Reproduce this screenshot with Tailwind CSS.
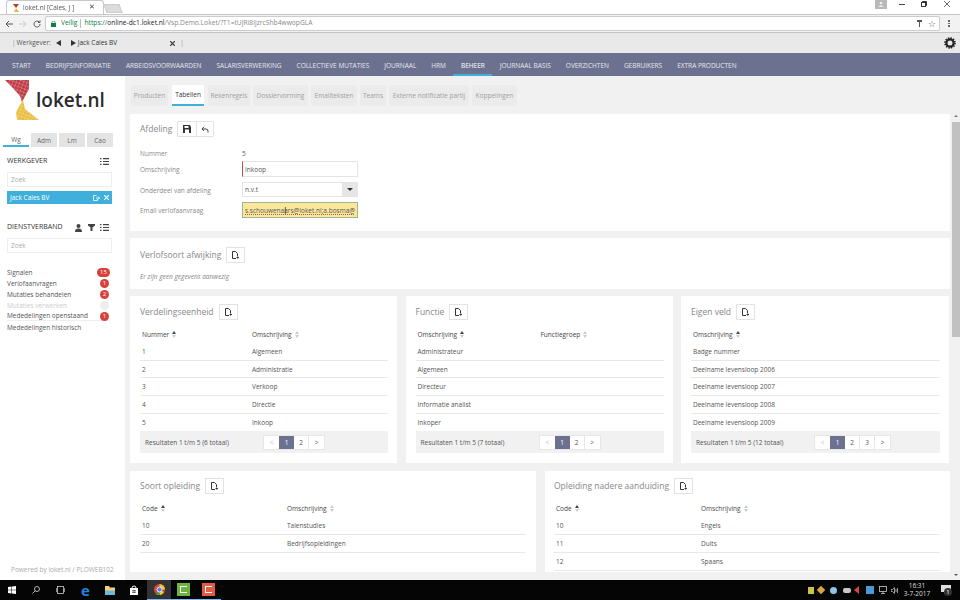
<!DOCTYPE html>
<html lang="nl">
<head>
  <meta charset="UTF-8">
  <title>loket.nl</title>
  <script src="https://cdn.jsdelivr.net/npm/@tailwindcss/browser@4"></script>
</head>
<body class="w-[960px] h-[600px] overflow-hidden bg-white font-['Open_Sans',sans-serif] text-[6.5px] text-[#555] blur-[0.35px]">

  <!-- Chrome tabs -->
  <div class="h-[15px] flex items-end bg-white border-b border-[#c8c8c8] relative">
    <div class="ml-[6px] w-[98px] h-[14px] border border-b-0 border-[#c8c8c8] rounded-t-[3px] bg-white flex items-center pl-[6px] pr-[2px] text-[6.5px] text-[#555]">
      <svg class="w-[6px] h-[8px] mr-[4px]" viewBox="0 0 6 8"><path d="M0 0h6L3 4z" fill="#c0392b"/><path d="M3 4 1 8h5z" fill="#e6b93a"/></svg>
      <span>loket.nl [Cales, J ]</span>
      <span class="ml-auto mr-[6px] text-[7px] text-[#444]">✕</span>
    </div>
    <div class="ml-[1px] w-[16px] h-[9px] mb-[1px] bg-[#dcdcdc] border border-[#ccc] skew-x-[20deg]"></div>
    <div class="ml-auto mb-[5px] flex items-center">
      <div class="w-[12px] h-[10px] bg-[#b9b9b9] flex items-center justify-center">
        <svg class="w-[6px] h-[6px]" viewBox="0 0 6 6"><circle cx="3" cy="2" r="1.3" fill="#eee"/><path d="M.5 6c0-2 5-2 5 0z" fill="#eee"/></svg>
      </div>
      <svg class="w-[6px] h-[6px] ml-[12px]" viewBox="0 0 6 6"><path d="M0 3.5h6" stroke="#444"/></svg>
      <svg class="w-[6px] h-[6px] ml-[16px]" viewBox="0 0 6 6" fill="none" stroke="#333"><rect x=".5" y="1.5" width="4" height="4"/><path d="M1.5 1.5V.5h4v4h-1"/></svg>
      <svg class="w-[6px] h-[6px] ml-[17px] mr-[10px]" viewBox="0 0 6 6" stroke="#444" stroke-width=".8"><path d="M0 0l6 6M6 0 0 6"/></svg>
    </div>
  </div>

  <!-- Chrome toolbar -->
  <div class="h-[18px] bg-[#f2f2f2] border-b border-[#c4c4c4] flex items-center">
    <svg class="ml-[5px] w-[8px] h-[8px]" viewBox="0 0 8 8" fill="none" stroke="#555" stroke-width="1"><path d="M8 4H1M4 1 1 4l3 3"/></svg>
    <svg class="ml-[6px] w-[8px] h-[8px]" viewBox="0 0 8 8" fill="none" stroke="#ccc" stroke-width="1"><path d="M0 4h7M4 1l3 3-3 3"/></svg>
    <svg class="ml-[6px] w-[8px] h-[8px]" viewBox="0 0 8 8" fill="none" stroke="#555" stroke-width="1"><path d="M7 4a3 3 0 1 1-1-2.2M7 .5v2H5"/></svg>
    <div class="ml-[4px] w-[895px] h-[15px] bg-white border border-[#ccc] rounded-[2px] flex items-center text-[6.7px]">
      <svg class="ml-[5px] w-[5px] h-[6px]" viewBox="0 0 5 6"><rect y="2" width="5" height="4" fill="#0b8043"/><path d="M1 2.5V1.500a1.500 1.500 0 0 1 3 0v1" fill="none" stroke="#0b8043" stroke-width=".7"/></svg>
      <span class="ml-[5px] text-[#0b8043]">Veilig</span>
      <span class="ml-[3px] mr-[3px] w-px h-[9px] bg-[#bbb]"></span>
      <span class="text-[#0b8043]">https://</span><span class="text-[#222]">online-dc1.loket.nl</span><span class="text-[#888]">/Vsp.Demo.Loket/?T1=tUJRi8IjzrcShb4wwopGLA</span>
      <svg class="ml-auto w-[5px] h-[7px]" viewBox="0 0 5 7"><path d="M0 0h5v2H3v5H2V2H0z" fill="#555"/></svg>
      <span class="ml-[6px] mr-[3px] text-[9px] leading-none text-[#555]">☆</span>
    </div>
    <div class="ml-[8px] flex flex-col gap-[1px]">
      <span class="w-[1.5px] h-[1.5px] bg-[#666]"></span><span class="w-[1.5px] h-[1.5px] bg-[#666]"></span><span class="w-[1.5px] h-[1.5px] bg-[#666]"></span>
    </div>
  </div>

  <!-- Employer bar -->
  <div class="h-[20px] bg-[#e9e9e9] flex items-center pl-[12px] text-[6.5px] text-[#555]">
    <span class="text-[#999] mr-[1px]">|</span><span>Werkgever:</span>
    <span class="ml-[5px] w-0 h-0 border-y-[3px] border-y-transparent border-r-[5px] border-r-[#333]"></span>
    <span class="ml-[10px] w-0 h-0 border-y-[3px] border-y-transparent border-l-[5px] border-l-[#333]"></span>
    <span class="ml-[2px] text-[#333]">Jack Cales BV</span>
    <svg class="ml-[53px] w-[5px] h-[5px]" viewBox="0 0 5 5" stroke="#333" stroke-width="1.2"><path d="M0 0l5 5M5 0 0 5"/></svg>
    <span class="ml-[5px] text-[#999]">|</span>
    <svg class="ml-auto mr-[4px] w-[12px] h-[12px]" viewBox="0 0 12 12"><circle cx="6" cy="6" r="3.6" fill="none" stroke="#222" stroke-width="2.2"/><circle cx="6" cy="6" r="5" fill="none" stroke="#222" stroke-width="1.6" stroke-dasharray="1.4 1.2"/></svg>
  </div>

  <!-- Main nav -->
  <nav class="h-[23px] bg-[#6d7190] flex items-stretch pl-[4.5px] text-[6.5px] uppercase text-[#e6e7ee]">
    <a class="px-[7.5px] pt-[2px] flex items-center">Start</a>
    <a class="px-[7.5px] pt-[2px] flex items-center">Bedrijfsinformatie</a>
    <a class="px-[7.5px] pt-[2px] flex items-center">Arbeidsvoorwaarden</a>
    <a class="px-[7.5px] pt-[2px] flex items-center">Salarisverwerking</a>
    <a class="px-[7.5px] pt-[2px] flex items-center">Collectieve mutaties</a>
    <a class="px-[7.5px] pt-[2px] flex items-center">Journaal</a>
    <a class="px-[7.5px] pt-[2px] flex items-center">HRM</a>
    <a class="px-[7.5px] pt-[4px] flex items-center text-white border-b-2 border-[#3fb0dc]">Beheer</a>
    <a class="px-[7.5px] pt-[2px] flex items-center">Journaal basis</a>
    <a class="px-[7.5px] pt-[2px] flex items-center">Overzichten</a>
    <a class="px-[7.5px] pt-[2px] flex items-center">Gebruikers</a>
    <a class="px-[7.5px] pt-[2px] flex items-center">Extra producten</a>
  </nav>

  <div class="h-[504px] flex overflow-hidden">

    <!-- Sidebar -->
    <aside class="w-[125px] shrink-0 bg-white flex flex-col">
      <div class="h-[57px] flex relative">
        <svg class="absolute left-0 top-0 w-[45px] h-[50px]" viewBox="0 0 45 50">
          <defs>
            <pattern id="tiles" width="3.4" height="3.4" patternUnits="userSpaceOnUse" patternTransform="rotate(20)">
              <path d="M0 0h3.4M0 0v3.4" stroke="#fff" stroke-width=".4"/>
            </pattern>
          </defs>
          <path d="M5 4 29 4 29 13 22 26 20 20 12 11z" fill="#bf3a45"/>
          <path d="M23 24 25 33 39 44 33 44 17 44 16 36z" fill="#e8bd3f"/>
          <path d="M5 4 29 4 29 13 22 26 20 20 12 11z" fill="url(#tiles)"/>
          <path d="M23 24 25 33 39 44 33 44 17 44 16 36z" fill="url(#tiles)"/>
        </svg>
        <span class="ml-[36px] mt-[10px] text-[19px] leading-[28px] font-semibold text-[#2b2b2b]">loket.nl</span>
      </div>

      <div class="flex gap-[2px] pl-[3px] text-[6.5px] text-[#666]">
        <div class="w-[26px] h-[14px] pt-px flex items-center justify-center border-b-2 border-[#3fb0dc] bg-white">Wg</div>
        <div class="w-[26px] h-[14px] pt-px flex items-center justify-center bg-[#e4e4e4]">Adm</div>
        <div class="w-[26px] h-[14px] pt-px flex items-center justify-center bg-[#e4e4e4]">Lm</div>
        <div class="w-[26px] h-[14px] pt-px flex items-center justify-center bg-[#e4e4e4]">Cao</div>
      </div>

      <div class="mt-[9px] pl-[7px] pr-[13px]">
        <div class="h-[10px] pt-px pr-[3px] flex items-center justify-between text-[#333] text-[7px]">
          <span>WERKGEVER</span>
          <svg class="w-[9px] h-[7px]" viewBox="0 0 9 7" fill="#444"><path d="M0 0h1.500v1.200H0zM3 0h6v1.200H3zM0 2.900h1.500v1.200H0zM3 2.900h6v1.200H3zM0 5.800h1.500V7H0zM3 5.800h6V7H3z"/></svg>
        </div>
        <div class="mt-[6px] h-[15px] pt-px border border-[#eee] flex items-center pl-[3px] text-[#aaa]">Zoek</div>
        <div class="mt-[4px] h-[13px] bg-[#3fb0dc] flex items-center pl-[3px] pr-[3px] text-white">
          <span>Jack Cales BV</span>
          <svg class="ml-auto w-[7px] h-[6px]" viewBox="0 0 7 6" fill="none" stroke="#fff" stroke-width=".8"><path d="M3.500.5H.5v5h4V4M3 3h3.500M5 1.500 6.500 3 5 4.500"/></svg>
          <svg class="ml-[4px] w-[5px] h-[5px]" viewBox="0 0 5 5" stroke="#fff" stroke-width="1.2"><path d="M0 0l5 5M5 0 0 5"/></svg>
        </div>
      </div>

      <div class="mt-[18px] pl-[7px] pr-[13px]">
        <div class="h-[10px] pt-px pr-[3px] flex items-center text-[#333] text-[7px]">
          <span>DIENSTVERBAND</span>
          <svg class="ml-auto w-[9px] h-[8px]" viewBox="0 0 9 8" fill="#444"><circle cx="4.500" cy="2" r="2"/><path d="M1 8c0-3 2-3.500 3.500-3.500S8 5 8 8z"/></svg>
          <svg class="ml-[5px] w-[7px] h-[7px]" viewBox="0 0 7 7" fill="#444"><path d="M0 0h7v1.500L4.500 3.500V7h-2V3.500L0 1.500z"/></svg>
          <svg class="ml-[5px] w-[9px] h-[7px]" viewBox="0 0 9 7" fill="#444"><path d="M0 0h1.500v1.200H0zM3 0h6v1.200H3zM0 2.900h1.500v1.200H0zM3 2.900h6v1.200H3zM0 5.800h1.500V7H0zM3 5.800h6V7H3z"/></svg>
        </div>
        <div class="mt-[6px] h-[15px] pt-px border border-[#eee] flex items-center pl-[3px] text-[#aaa]">Zoek</div>
      </div>

      <ul class="mt-[13px] pl-[7px] pr-[15px] text-[#555]">
        <li class="h-[11px] pt-[2px] flex items-center justify-between"><span>Signalen</span><span class="w-[13px] h-[9px] rounded-full bg-[#d9403a] text-white text-[6px] leading-[9px] text-center">15</span></li>
        <li class="h-[11px] pt-[2px] flex items-center justify-between"><span>Verlofaanvragen</span><span class="w-[9px] h-[9px] mr-[1px] rounded-full bg-[#d9403a] text-white text-[6px] leading-[9px] text-center">1</span></li>
        <li class="h-[11px] pt-[2px] flex items-center justify-between"><span>Mutaties behandelen</span><span class="w-[9px] h-[9px] mr-[1px] rounded-full bg-[#d9403a] text-white text-[6px] leading-[9px] text-center">2</span></li>
        <li class="h-[11px] pt-[2px] flex items-center justify-between text-[#ccc]"><span>Mutaties verwerken</span><span class="w-[9px] h-[9px] mr-[1px] rounded-full bg-[#eee]"></span></li>
        <li class="h-[11px] pt-[2px] flex items-center justify-between border-b border-[#eee]"><span>Mededelingen openstaand</span><span class="w-[9px] h-[9px] mr-[1px] rounded-full bg-[#d9403a] text-white text-[6px] leading-[9px] text-center">1</span></li>
        <li class="h-[11px] pt-[2px] flex items-center"><span>Mededelingen historisch</span></li>
      </ul>

      <div class="mt-auto pl-[11px] pb-[5px] text-[#aaa] text-[6.5px]">Powered by loket.nl / PLOWEB102</div>
    </aside>

    <!-- Content -->
    <main class="flex-1 bg-[#f1f1f1] pl-[5px] pr-[2px] pt-[9px] overflow-hidden">

      <div class="flex gap-[3px] h-[21px] pl-[1px] text-[#a0a0a0]">
        <div class="w-[37px] pt-px bg-[#ebebeb] rounded-[2px] flex items-center justify-center">Producten</div>
        <div class="w-[32px] pt-px mx-[1px] bg-white text-[#333] border-b-2 border-[#3fb0dc] flex items-center justify-center">Tabellen</div>
        <div class="w-[42px] pt-px bg-[#ebebeb] rounded-[2px] flex items-center justify-center">Rekenregels</div>
        <div class="w-[55px] pt-px bg-[#ebebeb] rounded-[2px] flex items-center justify-center">Dossiervorming</div>
        <div class="w-[46px] pt-px bg-[#ebebeb] rounded-[2px] flex items-center justify-center">Emailteksten</div>
        <div class="w-[26px] pt-px bg-[#ebebeb] rounded-[2px] flex items-center justify-center">Teams</div>
        <div class="w-[80px] pt-px bg-[#ebebeb] rounded-[2px] flex items-center justify-center">Externe notificatie partij</div>
        <div class="w-[45px] pt-px bg-[#ebebeb] rounded-[2px] flex items-center justify-center">Koppelingen</div>
      </div>

      <!-- Afdeling -->
      <section class="mt-[8px] h-[117px] bg-white pl-[10px] pt-[7px]">
        <div class="flex items-center h-[16px]">
          <h2 class="text-[8.5px] text-[#888]">Afdeling</h2>
          <div class="ml-[5px] flex h-[16px] border border-[#e2e2e2] rounded-[1px]">
            <span class="w-[19px] flex items-center justify-center border-r border-[#e2e2e2]">
              <svg class="w-[8px] h-[8px]" viewBox="0 0 8 8"><path d="M0 0h6.500L8 1.500V8H0z" fill="#333"/><rect x="1.500" y="1" width="4" height="2" fill="#fff"/><rect x="2" y="4.500" width="4" height="3.500" fill="#fff"/></svg>
            </span>
            <span class="w-[16px] flex items-center justify-center">
              <svg class="w-[8px] h-[7px]" viewBox="0 0 8 7" fill="none" stroke="#444" stroke-width="1"><path d="M1 3h4a2 2 0 0 1 2 2v1.500M3 .8 1 3l2 2"/></svg>
            </span>
          </div>
        </div>
        <div class="mt-[10px] h-[12px] pt-[2px] flex items-center"><span class="w-[102px] text-[#888]">Nummer</span><span class="text-[#555]">5</span></div>
        <div class="mt-[2px] h-[16px] flex items-center"><span class="w-[102px] pt-[2px] text-[#888]">Omschrijving</span>
          <div class="w-[116px] h-[16px] pt-px border border-[#e4e4e4] border-l-[#c0504d] flex items-center pl-[2px] text-[#555]">Inkoop</div>
        </div>
        <div class="mt-[5px] h-[15px] flex items-center"><span class="w-[102px] pt-[2px] text-[#888]">Onderdeel van afdeling</span>
          <div class="w-[116px] h-[15px] border border-[#e4e4e4] flex items-center pl-[2px] text-[#555]"><span class="pt-px">n.v.t</span>
            <span class="ml-auto w-[15px] h-full bg-[#e6e6e6] flex items-center justify-center"><span class="w-0 h-0 border-x-[3px] border-x-transparent border-t-[3px] border-t-[#333]"></span></span>
          </div>
        </div>
        <div class="mt-[5px] h-[16px] flex items-center"><span class="w-[102px] pt-[2px] text-[#888]">Email verlofaanvraag</span>
          <div class="w-[116px] h-[16px] pt-px border border-[#9db59b] bg-[#fde89a] flex items-center pl-[2px] text-[#555] underline decoration-dotted decoration-[#c0504d] whitespace-nowrap relative">s.schouwenaars@loket.nl;a.bosma@
            <span class="absolute left-[41px] top-[2px] text-[9px] leading-[11px] text-[#333] no-underline">I</span>
          </div>
        </div>
      </section>

      <!-- Verlofsoort afwijking -->
      <section class="mt-[7px] h-[51px] bg-white pl-[10px] pt-[9px]">
        <div class="flex items-center h-[16px]">
          <h2 class="text-[8.5px] text-[#888]">Verlofsoort afwijking</h2>
          <span class="ml-[5px] w-[19px] h-[16px] border border-[#e2e2e2] flex items-center justify-center">
            <svg class="w-[7px] h-[8px]" viewBox="0 0 7 8" fill="none" stroke="#333" stroke-width="1"><path d="M4 7.500H.5v-7h3l2 2v2.500"/><path d="M4.500 6.500h2.500M5.700 5.300v2.400" stroke-width=".9"/></svg>
          </span>
        </div>
        <p class="mt-[9px] italic text-[#888] text-[6.5px]">Er zijn geen gegevens aanwezig</p>
      </section>

      <!-- Drie tabellen -->
      <div class="mt-[7px] flex gap-[8.500px]">

        <section class="w-[267px] h-[167px] bg-white pl-[10px] pr-[9px] pt-[8px]">
          <div class="flex items-center h-[16px]">
            <h2 class="text-[8.5px] text-[#888]">Verdelingseenheid</h2>
            <span class="ml-[5px] w-[19px] h-[16px] border border-[#e2e2e2] flex items-center justify-center"><svg class="w-[7px] h-[8px]" viewBox="0 0 7 8" fill="none" stroke="#333" stroke-width="1"><path d="M4 7.500H.5v-7h3l2 2v2.500"/><path d="M4.500 6.500h2.500M5.700 5.300v2.400" stroke-width=".9"/></svg></span>
          </div>
          <div class="h-[23px] flex items-center pl-[2px] pt-[6px] text-[#444]">
            <span class="w-[110px] flex items-center">Nummer<span class="ml-[3px] flex flex-col gap-[1px]"><i class="w-0 h-0 border-x-[2.500px] border-x-transparent border-b-[3px] border-b-[#444]"></i><i class="w-0 h-0 border-x-[2.500px] border-x-transparent border-t-[3px] border-t-[#ccc]"></i></span></span>
            <span class="flex items-center">Omschrijving<span class="ml-[3px] flex flex-col gap-[1px]"><i class="w-0 h-0 border-x-[2.500px] border-x-transparent border-b-[3px] border-b-[#ccc]"></i><i class="w-0 h-0 border-x-[2.500px] border-x-transparent border-t-[3px] border-t-[#ccc]"></i></span></span>
          </div>
          <div class="h-[17.700px] pt-px flex items-center pl-[2px] border-b border-[#e8e8e8]"><span class="w-[110px]">1</span><span>Algemeen</span></div>
          <div class="h-[17.700px] pt-px flex items-center pl-[2px] border-b border-[#e8e8e8]"><span class="w-[110px]">2</span><span>Administratie</span></div>
          <div class="h-[17.700px] pt-px flex items-center pl-[2px] border-b border-[#e8e8e8]"><span class="w-[110px]">3</span><span>Verkoop</span></div>
          <div class="h-[17.700px] pt-px flex items-center pl-[2px] border-b border-[#e8e8e8]"><span class="w-[110px]">4</span><span>Directie</span></div>
          <div class="h-[17.700px] pt-px flex items-center pl-[2px]"><span class="w-[110px]">5</span><span>Inkoop</span></div>
          <div class="h-[22px] bg-[#f1f1f1] flex items-center pl-[5px] text-[#555] text-[6.500px]">
            <span class="w-[118px]">Resultaten 1 t/m 5 (6 totaal)</span>
            <div class="flex h-[15px] bg-white border border-[#e6e6e6] text-[6.500px]">
              <span class="w-[15px] flex items-center justify-center text-[#bbb]">&lt;</span>
              <span class="w-[15px] flex items-center justify-center bg-[#6d7190] text-white">1</span>
              <span class="w-[15px] flex items-center justify-center border-r border-[#e6e6e6]">2</span>
              <span class="w-[15px] flex items-center justify-center">&gt;</span>
            </div>
          </div>
        </section>

        <section class="w-[267px] h-[167px] bg-white pl-[10px] pr-[9px] pt-[8px]">
          <div class="flex items-center h-[16px]">
            <h2 class="text-[8.5px] text-[#888]">Functie</h2>
            <span class="ml-[5px] w-[19px] h-[16px] border border-[#e2e2e2] flex items-center justify-center"><svg class="w-[7px] h-[8px]" viewBox="0 0 7 8" fill="none" stroke="#333" stroke-width="1"><path d="M4 7.500H.5v-7h3l2 2v2.500"/><path d="M4.500 6.500h2.500M5.700 5.300v2.400" stroke-width=".9"/></svg></span>
          </div>
          <div class="h-[23px] flex items-center pl-[2px] pt-[6px] text-[#444]">
            <span class="w-[123px] flex items-center">Omschrijving<span class="ml-[3px] flex flex-col gap-[1px]"><i class="w-0 h-0 border-x-[2.500px] border-x-transparent border-b-[3px] border-b-[#444]"></i><i class="w-0 h-0 border-x-[2.500px] border-x-transparent border-t-[3px] border-t-[#ccc]"></i></span></span>
            <span class="flex items-center">Functiegroep<span class="ml-[3px] flex flex-col gap-[1px]"><i class="w-0 h-0 border-x-[2.500px] border-x-transparent border-b-[3px] border-b-[#ccc]"></i><i class="w-0 h-0 border-x-[2.500px] border-x-transparent border-t-[3px] border-t-[#ccc]"></i></span></span>
          </div>
          <div class="h-[17.700px] pt-px flex items-center pl-[2px] border-b border-[#e8e8e8]">Administrateur</div>
          <div class="h-[17.700px] pt-px flex items-center pl-[2px] border-b border-[#e8e8e8]">Algemeen</div>
          <div class="h-[17.700px] pt-px flex items-center pl-[2px] border-b border-[#e8e8e8]">Directeur</div>
          <div class="h-[17.700px] pt-px flex items-center pl-[2px] border-b border-[#e8e8e8]">Informatie analist</div>
          <div class="h-[17.700px] pt-px flex items-center pl-[2px]">Inkoper</div>
          <div class="h-[22px] bg-[#f1f1f1] flex items-center pl-[5px] text-[#555] text-[6.500px]">
            <span class="w-[118px]">Resultaten 1 t/m 5 (7 totaal)</span>
            <div class="flex h-[15px] bg-white border border-[#e6e6e6] text-[6.500px]">
              <span class="w-[15px] flex items-center justify-center text-[#bbb]">&lt;</span>
              <span class="w-[15px] flex items-center justify-center bg-[#6d7190] text-white">1</span>
              <span class="w-[15px] flex items-center justify-center border-r border-[#e6e6e6]">2</span>
              <span class="w-[15px] flex items-center justify-center">&gt;</span>
            </div>
          </div>
        </section>

        <section class="w-[268px] h-[167px] bg-white pl-[10px] pr-[9px] pt-[8px]">
          <div class="flex items-center h-[16px]">
            <h2 class="text-[8.5px] text-[#888]">Eigen veld</h2>
            <span class="ml-[5px] w-[19px] h-[16px] border border-[#e2e2e2] flex items-center justify-center"><svg class="w-[7px] h-[8px]" viewBox="0 0 7 8" fill="none" stroke="#333" stroke-width="1"><path d="M4 7.500H.5v-7h3l2 2v2.500"/><path d="M4.500 6.500h2.500M5.700 5.300v2.400" stroke-width=".9"/></svg></span>
          </div>
          <div class="h-[23px] flex items-center pl-[2px] pt-[6px] text-[#444]">
            <span class="flex items-center">Omschrijving<span class="ml-[3px] flex flex-col gap-[1px]"><i class="w-0 h-0 border-x-[2.500px] border-x-transparent border-b-[3px] border-b-[#444]"></i><i class="w-0 h-0 border-x-[2.500px] border-x-transparent border-t-[3px] border-t-[#ccc]"></i></span></span>
          </div>
          <div class="h-[17.700px] pt-px flex items-center pl-[2px] border-b border-[#e8e8e8]">Badge nummer</div>
          <div class="h-[17.700px] pt-px flex items-center pl-[2px] border-b border-[#e8e8e8]">Deelname levensloop 2006</div>
          <div class="h-[17.700px] pt-px flex items-center pl-[2px] border-b border-[#e8e8e8]">Deelname levensloop 2007</div>
          <div class="h-[17.700px] pt-px flex items-center pl-[2px] border-b border-[#e8e8e8]">Deelname levensloop 2008</div>
          <div class="h-[17.700px] pt-px flex items-center pl-[2px]">Deelname levensloop 2009</div>
          <div class="h-[22px] bg-[#f1f1f1] flex items-center pl-[5px] text-[#555] text-[6.500px]">
            <span class="w-[118px]">Resultaten 1 t/m 5 (12 totaal)</span>
            <div class="flex h-[15px] bg-white border border-[#e6e6e6] text-[6.500px]">
              <span class="w-[15px] flex items-center justify-center text-[#bbb]">&lt;</span>
              <span class="w-[15px] flex items-center justify-center bg-[#6d7190] text-white">1</span>
              <span class="w-[15px] flex items-center justify-center border-r border-[#e6e6e6]">2</span>
              <span class="w-[15px] flex items-center justify-center border-r border-[#e6e6e6]">3</span>
              <span class="w-[15px] flex items-center justify-center">&gt;</span>
            </div>
          </div>
        </section>
      </div>

      <!-- Onderste rij -->
      <div class="mt-[8px] flex gap-[9px]">
        <section class="w-[406px] h-[101px] bg-white pl-[10px] pr-[11px] pt-[7px]">
          <div class="flex items-center h-[16px]">
            <h2 class="text-[8.5px] text-[#888]">Soort opleiding</h2>
            <span class="ml-[5px] w-[19px] h-[16px] border border-[#e2e2e2] flex items-center justify-center"><svg class="w-[7px] h-[8px]" viewBox="0 0 7 8" fill="none" stroke="#333" stroke-width="1"><path d="M4 7.500H.5v-7h3l2 2v2.500"/><path d="M4.500 6.500h2.500M5.700 5.300v2.400" stroke-width=".9"/></svg></span>
          </div>
          <div class="h-[23px] flex items-center pl-[2px] pt-[6px] text-[#444]">
            <span class="w-[145px] flex items-center">Code<span class="ml-[3px] flex flex-col gap-[1px]"><i class="w-0 h-0 border-x-[2.500px] border-x-transparent border-b-[3px] border-b-[#444]"></i><i class="w-0 h-0 border-x-[2.500px] border-x-transparent border-t-[3px] border-t-[#ccc]"></i></span></span>
            <span class="flex items-center">Omschrijving<span class="ml-[3px] flex flex-col gap-[1px]"><i class="w-0 h-0 border-x-[2.500px] border-x-transparent border-b-[3px] border-b-[#ccc]"></i><i class="w-0 h-0 border-x-[2.500px] border-x-transparent border-t-[3px] border-t-[#ccc]"></i></span></span>
          </div>
          <div class="h-[18px] pt-px flex items-center pl-[2px] border-b border-[#e8e8e8]"><span class="w-[145px]">10</span><span>Talenstudies</span></div>
          <div class="h-[18px] pt-px flex items-center pl-[2px] border-b border-[#e8e8e8]"><span class="w-[145px]">20</span><span>Bedrijfsopleidingen</span></div>
        </section>

        <section class="w-[405px] h-[101px] bg-white pl-[9px] pr-[10px] pt-[7px]">
          <div class="flex items-center h-[16px]">
            <h2 class="text-[8.5px] text-[#888]">Opleiding nadere aanduiding</h2>
            <span class="ml-[5px] w-[19px] h-[16px] border border-[#e2e2e2] flex items-center justify-center"><svg class="w-[7px] h-[8px]" viewBox="0 0 7 8" fill="none" stroke="#333" stroke-width="1"><path d="M4 7.500H.5v-7h3l2 2v2.500"/><path d="M4.500 6.500h2.500M5.700 5.300v2.400" stroke-width=".9"/></svg></span>
          </div>
          <div class="h-[23px] flex items-center pl-[2px] pt-[6px] text-[#444]">
            <span class="w-[145px] flex items-center">Code<span class="ml-[3px] flex flex-col gap-[1px]"><i class="w-0 h-0 border-x-[2.500px] border-x-transparent border-b-[3px] border-b-[#444]"></i><i class="w-0 h-0 border-x-[2.500px] border-x-transparent border-t-[3px] border-t-[#ccc]"></i></span></span>
            <span class="flex items-center">Omschrijving<span class="ml-[3px] flex flex-col gap-[1px]"><i class="w-0 h-0 border-x-[2.500px] border-x-transparent border-b-[3px] border-b-[#ccc]"></i><i class="w-0 h-0 border-x-[2.500px] border-x-transparent border-t-[3px] border-t-[#ccc]"></i></span></span>
          </div>
          <div class="h-[18px] pt-px flex items-center pl-[2px] border-b border-[#e8e8e8]"><span class="w-[145px]">10</span><span>Engels</span></div>
          <div class="h-[18px] pt-px flex items-center pl-[2px] border-b border-[#e8e8e8]"><span class="w-[145px]">11</span><span>Duits</span></div>
          <div class="h-[18px] pt-px flex items-center pl-[2px] border-b border-[#e8e8e8]"><span class="w-[145px]">12</span><span>Spaans</span></div>
        </section>
      </div>
    </main>

    <!-- Scrollbar -->
    <div class="w-[8px] shrink-0 bg-[#f1f1f1] flex flex-col items-center">
      <span class="mt-[39px] w-0 h-0 border-x-[2px] border-x-transparent border-b-[2px] border-b-[#777]"></span>
      <span class="mt-[5px] w-full h-[215px] bg-[#c1c1c1]"></span>
      <span class="mt-auto mb-[4px] w-0 h-0 border-x-[2px] border-x-transparent border-t-[2px] border-t-[#555]"></span>
    </div>
  </div>

  <!-- Windows taskbar -->
  <footer class="h-[20px] bg-[#050505] flex items-center relative">
    <svg class="ml-[8px] w-[8px] h-[8px]" viewBox="0 0 8 8" fill="#fff"><path d="M0 1l3.500-.5V3.800H0zM4 .4 8 0v3.800H4zM0 4.200h3.500v3.300L0 7zM4 4.200h4V8l-4-.5z"/></svg>
    <svg class="ml-[16px] w-[8px] h-[8px]" viewBox="0 0 8 8" fill="none" stroke="#ddd" stroke-width=".8"><circle cx="5" cy="3" r="2.500"/><path d="M3.200 4.800.5 7.500"/></svg>
    <svg class="ml-[16px] w-[9px] h-[8px]" viewBox="0 0 9 8" fill="none" stroke="#ccc" stroke-width=".8"><rect x="1.500" y=".5" width="6" height="7"/><path d="M.3 2v4M8.700 2v4"/></svg>
    <span class="ml-[15px] w-[11px] text-center text-[15px] leading-[15px] font-bold text-[#1e88e5]">e</span>
    <svg class="ml-[14px] w-[10px] h-[9px]" viewBox="0 0 10 9"><path d="M0 0h4l1 1.500h5V9H0z" fill="#f0cf77"/><rect y="4.500" width="10" height="4.500" fill="#6fb7d8"/></svg>
    <svg class="ml-[14px] w-[10px] h-[10px]" viewBox="0 0 10 10"><path d="M1 3h8v7H1z" fill="#fff"/><path d="M3 3a2 2 0 0 1 4 0" fill="none" stroke="#fff"/><path d="M3.500 5h1.300v1.300H3.500zM5.200 5h1.300v1.300H5.200zM3.500 6.700h1.300V8H3.500zM5.200 6.700h1.300V8H5.200z" fill="#333"/></svg>
    <div class="ml-[8px] w-[24px] h-[20px] bg-[#333] border-b border-[#76b9ed] flex items-center justify-center">
      <svg class="w-[11px] h-[11px]" viewBox="0 0 11 11"><circle cx="5.500" cy="5.500" r="5.500" fill="#d9453a"/><path d="M5.500 5.500 10 8a5.500 5.500 0 0 1-8 2.300z" fill="#4b9e4c"/><path d="M5.500 0A5.500 5.500 0 0 1 11 5.500H5.500L10 8a5.500 5.500 0 0 1-4 3z" fill="#f2c230"/><circle cx="5.500" cy="5.500" r="2.500" fill="#4a85e5" stroke="#fff" stroke-width=".8"/></svg>
    </div>
    <div class="w-[25px] h-[20px] border-b border-[#76b9ed] flex items-center justify-center">
      <span class="w-[13px] h-[13px] bg-[#6cb33f] flex items-center justify-center"><span class="w-[7px] h-[7px] border-[1.500px] border-r-0 border-white"></span></span>
    </div>
    <div class="w-[25px] h-[20px] border-b border-[#76b9ed] flex items-center justify-center">
      <span class="w-[13px] h-[13px] bg-[#e25c45] flex items-center justify-center"><span class="w-[7px] h-[7px] border-[1.500px] border-r-0 border-white"></span></span>
    </div>

    <div class="ml-auto flex items-center">
      <span class="w-[6px] h-[7px] bg-[#c9c24a]"></span>
      <span class="ml-[4px] w-[6px] h-[6px] bg-[#d9a441] rotate-45"></span>
      <span class="ml-[6.500px] w-[7px] h-[7px] rounded-full bg-[#8fc3e8]"></span>
      <span class="ml-[5.500px] w-[8px] h-[5px] rounded-[2px] bg-[#c8c8c8]"></span>
      <span class="ml-[3.500px] w-0 h-0 border-y-[4px] border-y-transparent border-r-[5px] border-r-[#d9453a]"></span>
      <span class="ml-[7px] w-[8px] h-[8px] bg-[#4a9ad4]"></span>
      <svg class="ml-[5px] w-[9px] h-[8px]" viewBox="0 0 9 8" fill="none" stroke="#ccc" stroke-width=".8"><rect x=".5" y=".5" width="7" height="5"/><path d="M4 5.500V8M2 7.600h4"/></svg>
      <svg class="ml-[3px] w-[8px] h-[7px]" viewBox="0 0 8 7" fill="none" stroke="#bbb" stroke-width=".8"><path d="M0 2.500h1.500L3.500.5v6l-2-2H0zM5 2v3M6.500 1v5"/></svg>
      <div class="ml-[3px] w-[30px] text-center whitespace-nowrap text-[6.500px] leading-[8.500px] text-[#ddd]">
        <div>16:31</div><div>3-7-2017</div>
      </div>
      <div class="ml-[9px] mr-[9px] relative w-[10px] h-[10px]">
        <svg class="w-[10px] h-[9px]" viewBox="0 0 10 9" fill="#ddd"><path d="M0 0h10v7H5L3 9V7H0z"/></svg>
        <span class="absolute left-[3px] top-[3px] w-[8px] h-[8px] rounded-full bg-[#333] text-white text-[6px] leading-[8px] text-center">1</span>
      </div>
    </div>
  </footer>
</body>
</html>
